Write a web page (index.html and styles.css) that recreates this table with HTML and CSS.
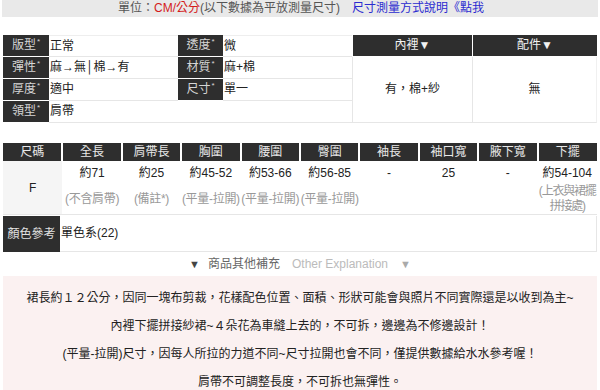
FILE: index.html
```html
<!DOCTYPE html>
<html>
<head>
<meta charset="utf-8">
<link rel="stylesheet" href="styles.css">
</head>
<body>
<div class="page">
  <div class="unitbar">單位：<span class="red">CM/公分</span>(以下數據為平放測量尺寸)<span class="link">尺寸測量方式說明《點我</span></div>

  <table class="spec">
    <colgroup>
      <col class="c-lab"><col class="c-val"><col class="c-lab2"><col class="c-val"><col class="c-lin"><col class="c-acc">
    </colgroup>
    <tr>
      <td class="lab">版型<sup>*</sup></td><td class="val">正常</td>
      <td class="lab">透度<sup>*</sup></td><td class="val">微</td>
      <td class="head">內裡▼</td><td class="head">配件▼</td>
    </tr>
    <tr>
      <td class="lab">彈性<sup>*</sup></td><td class="val">麻→無│棉→有</td>
      <td class="lab">材質<sup>*</sup></td><td class="val">麻+棉</td>
      <td class="merge" rowspan="3">有，棉+紗</td><td class="merge last" rowspan="3">無</td>
    </tr>
    <tr>
      <td class="lab">厚度<sup>*</sup></td><td class="val">適中</td>
      <td class="lab">尺寸<sup>*</sup></td><td class="val">單一</td>
    </tr>
    <tr>
      <td class="lab">領型<sup>*</sup></td><td class="val">肩帶</td>
      <td class="empty"></td><td class="val"></td>
    </tr>
  </table>

  <table class="size">
    <tr class="hrow">
      <th>尺碼</th><th>全長</th><th>肩帶長</th><th>胸圍</th><th>腰圍</th><th>臀圍</th><th>袖長</th><th>袖口寬</th><th>腋下寬</th><th>下擺</th>
    </tr>
    <tr class="vrow">
      <td class="fcell" rowspan="2">F</td>
      <td>約71</td><td>約25</td><td>約45-52</td><td>約53-66</td><td>約56-85</td><td>-</td><td>25</td><td>-</td><td>約54-104</td>
    </tr>
    <tr class="srow">
      <td>(不含肩帶)</td><td>(備註*)</td><td>(平量-拉開)</td><td>(平量-拉開)</td><td>(平量-拉開)</td><td></td><td></td><td></td><td class="two">(上衣與裙擺<br>拼接處)</td>
    </tr>
  </table>

  <table class="color">
    <tr>
      <td class="clab">顏色參考</td><td class="cval">單色系(22)</td>
    </tr>
  </table>

  <div class="other"><span class="tri">▼</span><span class="otitle">商品其他補充</span><span class="oen">Other Explanation</span><span class="tri2">▼</span></div>

  <div class="notes">
    <p>裙長約１２公分，因同一塊布剪裁，花樣配色位置、面積、形狀可能會與照片不同實際還是以收到為主~</p>
    <p>內裡下擺拼接紗裙~４朵花為車縫上去的，不可拆，邊邊為不修邊設計！</p>
    <p>(平量-拉開)尺寸，因每人所拉的力道不同~尺寸拉開也會不同，僅提供數據給水水參考喔！</p>
    <p>肩帶不可調整長度，不可拆也無彈性。</p>
  </div>
</div>
</body>
</html>
```

FILE: styles.css
```css
html, body {
  margin: 0;
  padding: 0;
  background: #fff;
}
body {
  font-family: "Liberation Sans", "Noto Sans CJK TC", sans-serif;
  font-size: 12px;
  color: #222;
}
.page {
  width: 600px;
  overflow: hidden;
}
.unitbar {
  margin: 0 2px;
  height: 17px;
  line-height: 17px;
  background: #e9e9e9;
  color: #555;
  text-align: center;
  padding-left: 2px;
  overflow: hidden;
}
.red { color: #d41b1b; }
.link { color: #2b2bd0; margin-left: 12px; }

table {
  border-collapse: separate;
  border-spacing: 0;
  margin: 0 3px;
  table-layout: fixed;
}
.spec {
  width: 594px;
  margin-top: 18px;
}
.c-lab { width: 46px; }
.c-val { width: 129px; }
.c-lab2 { width: 45px; }
.c-lin { width: 120px; }
.c-acc { width: 125px; }
.spec td {
  height: 21px;
  padding: 0;
  border-bottom: 1px solid #e6e6e6;
  line-height: 21px;
  white-space: nowrap;
  overflow: hidden;
}
.spec tr:first-child td.val { border-top: 1px solid #eeeeee; height: 20px; line-height: 20px; }
.spec td.lab {
  background: #2e2e2e;
  color: #d6d6d6;
  text-align: center;
  border-bottom: 1px solid #fff;
}
.spec td.empty { border-bottom: 1px solid #e6e6e6; }
.spec td.val { padding-left: 1px; }
sup {
  font-size: 8px;
  line-height: 0;
  vertical-align: 5px;
  margin-left: 1px;
}
.spec td.head {
  background: #2e2e2e;
  color: #f2f2f2;
  text-align: center;
  border-left: 1px solid #fff;
  border-bottom: 1px solid #fff;
}
.spec td.merge {
  text-align: center;
  vertical-align: middle;
  border-left: 1px solid #e6e6e6;
}
.spec td.merge.last { border-right: 1px solid #f0f0f0; }

.size {
  width: 594px;
  margin-top: 20px;
}
.size th, .size td {
  padding: 0;
  text-align: center;
  white-space: nowrap;
}
.size th {
  background: #2e2e2e;
  color: #e8e8e8;
  font-weight: normal;
  height: 18px;
  line-height: 18px;
  border-left: 1px solid #fff;
  border-right: 1px solid #fff;
}
.size th:first-child { border-left: 0; }
.size th:last-child { border-right: 0; }
.vrow td {
  height: 21px;
  line-height: 20px;
  padding-top: 2px;
  vertical-align: top;
  color: #222;
}
.size td.fcell {
  background: #f5f5f5;
  vertical-align: middle;
  border-bottom: 1px solid #e6e6e6;
  padding: 0;
}
.srow td {
  height: 30px;
  line-height: 15px;
  color: #999;
  border-bottom: 1px solid #e6e6e6;
  vertical-align: middle;
  letter-spacing: -0.3px;
}
.srow td.two {
  overflow: visible;
  letter-spacing: -1.2px;
}

.color {
  width: 594px;
  margin-top: 1px;
}
.color td {
  height: 35px;
  padding: 0;
  line-height: 35px;
}
.color td.clab {
  width: 57px;
  background: #2e2e2e;
  color: #e0e0e0;
  text-align: center;
}
.color td.cval {
  padding-left: 1px;
  border-bottom: 1px solid #e6e6e6;
  border-right: 1px solid #e6e6e6;
}

.other {
  height: 24px;
  line-height: 24px;
  text-align: center;
  color: #666;
}
.tri { color: #444; font-size: 11px; margin-right: 8px; }
.tri2 { color: #aaa; font-size: 11px; margin-left: 12px; }
.oen { color: #bbb; margin-left: 12px; font-family: "Liberation Sans", sans-serif; }

.notes {
  margin: 0 3px;
  background: #fbf1f1;
  padding-top: 8px;
  padding-bottom: 8px;
  text-align: center;
  color: #222;
}
.notes p {
  margin: 0;
  line-height: 28px;
}
```
